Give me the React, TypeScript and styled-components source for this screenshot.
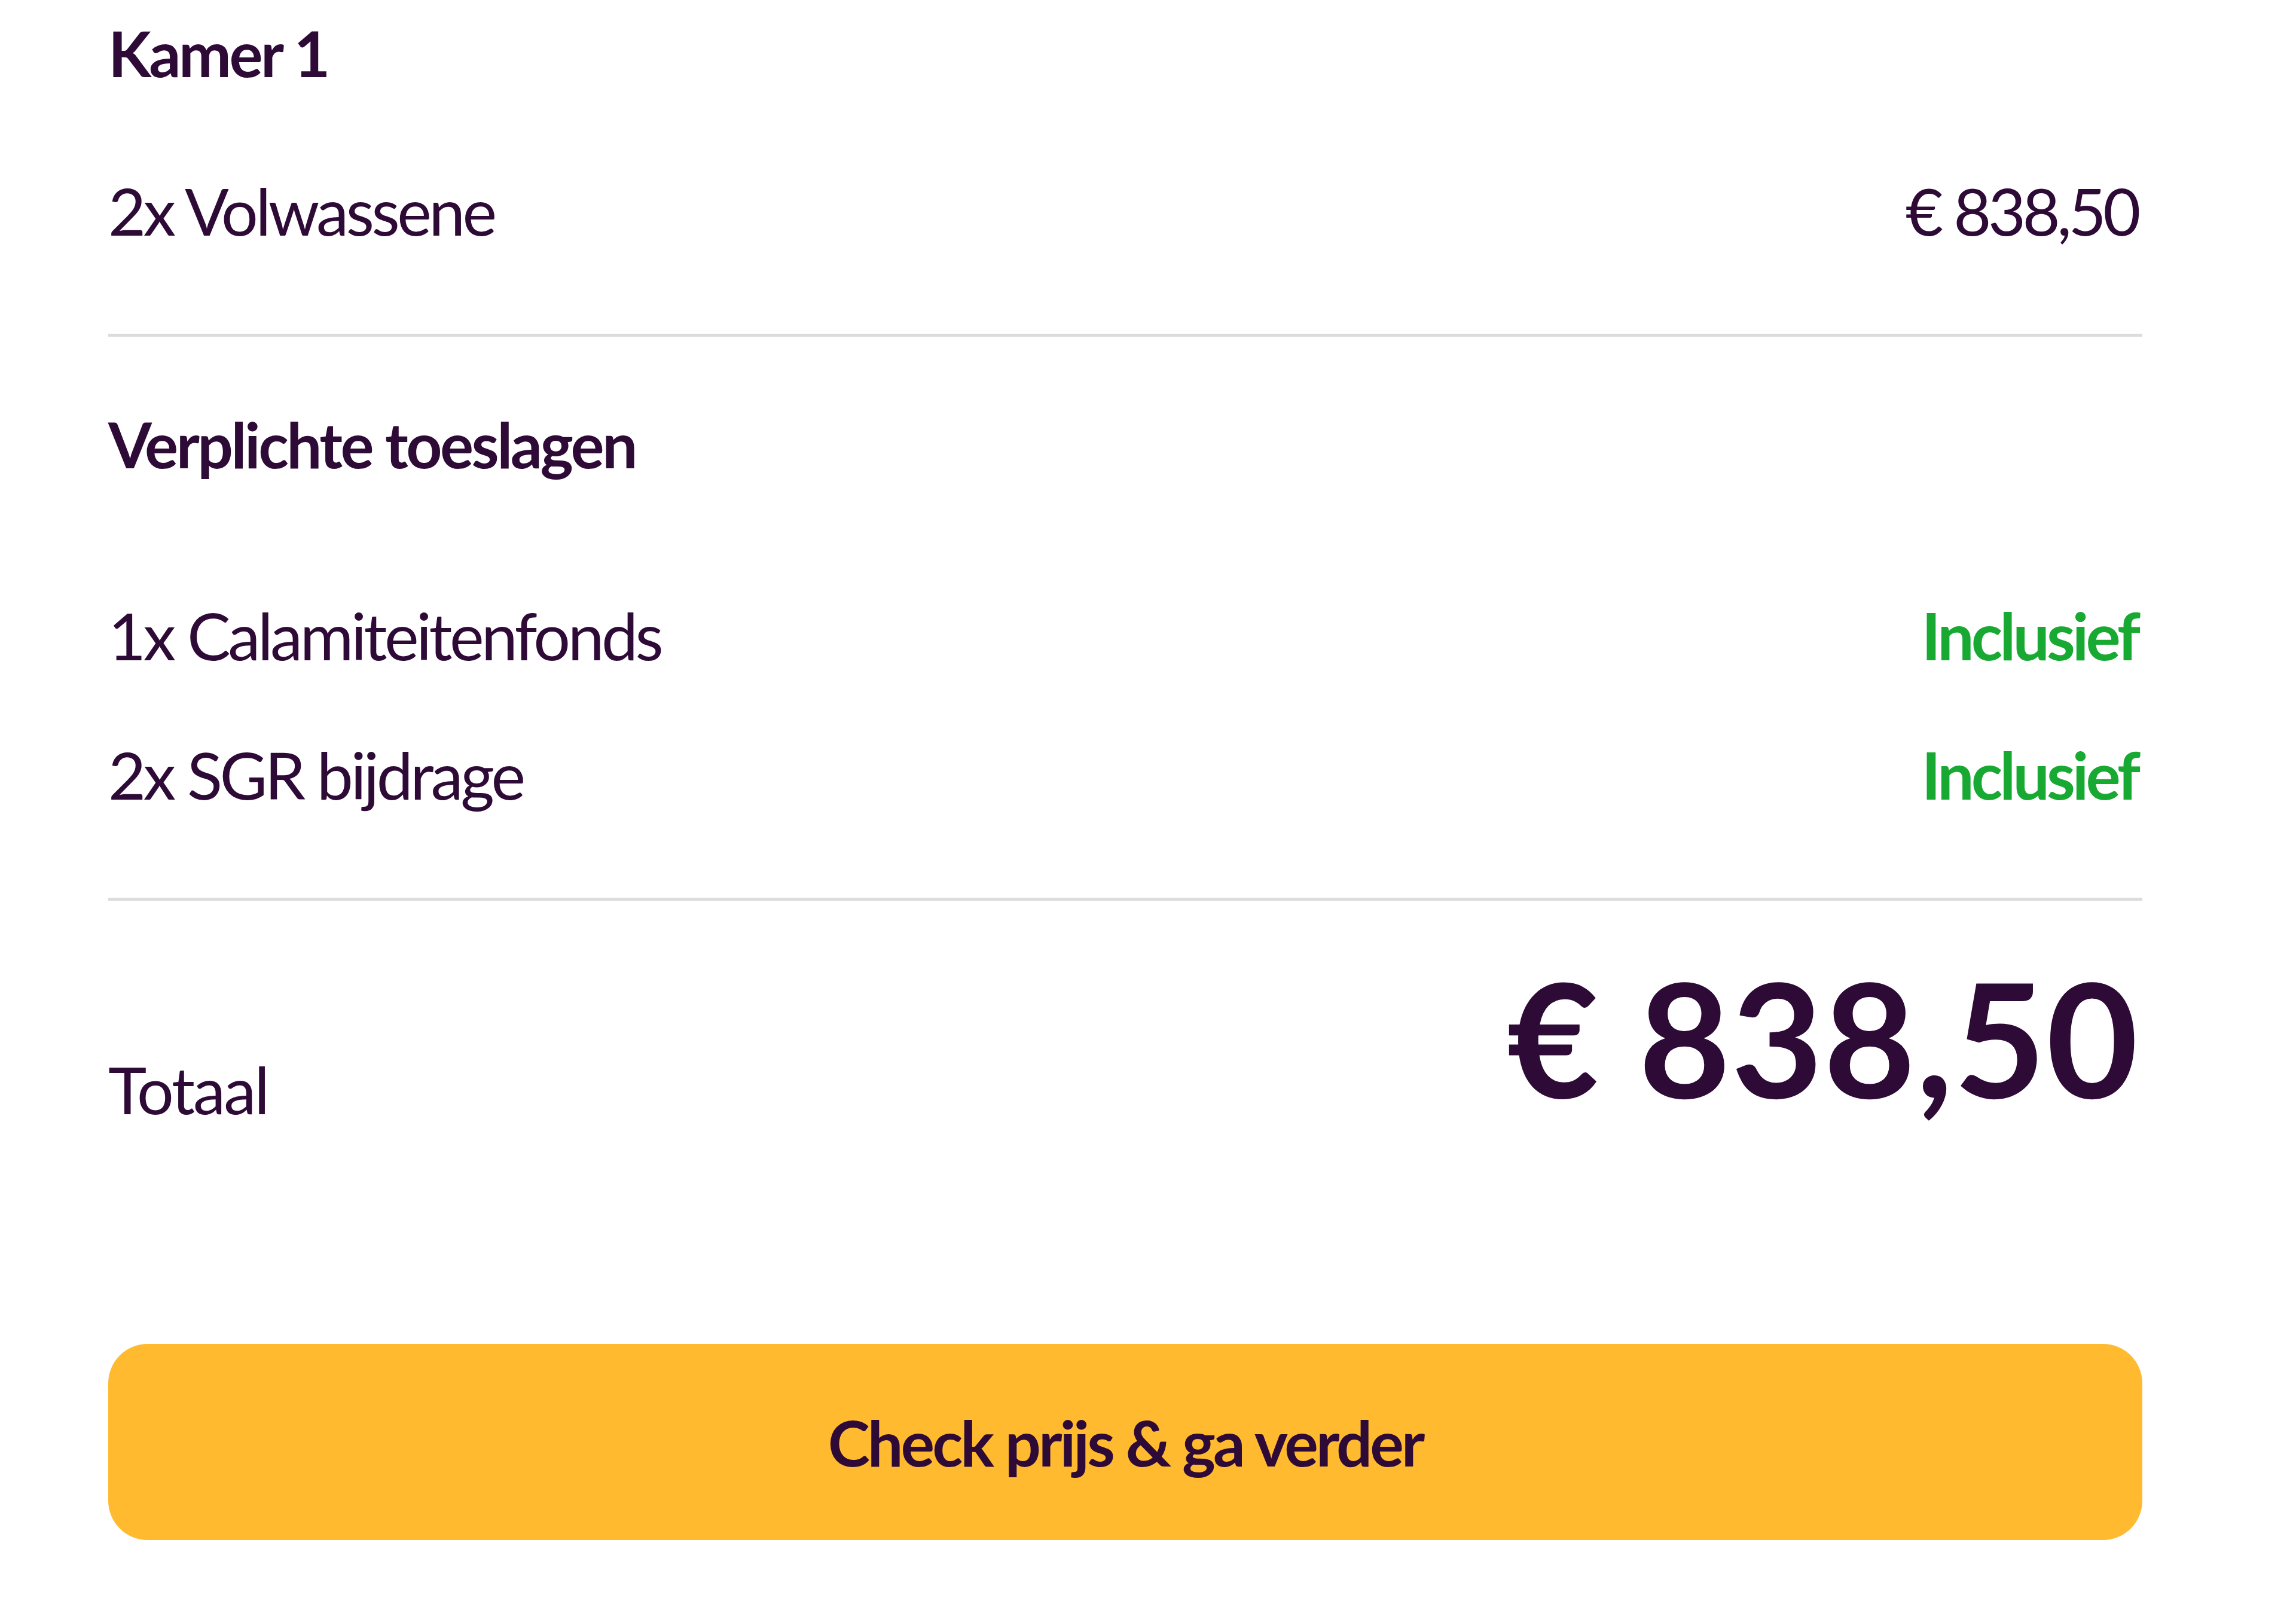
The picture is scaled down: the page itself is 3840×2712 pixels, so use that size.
import React from "react";
import styled, { createGlobalStyle } from "styled-components";

const GlobalStyle = createGlobalStyle`
  html, body {
    margin: 0;
    padding: 0;
    background: #ffffff;
  }
  body {
    font-family: Lato, "Open Sans", sans-serif;
    color: #2e0a36;
  }
`;

const Page = styled.div`
  width: 3402px;
  margin-left: 181px;
  padding-top: 25px;
  display: flex;
  flex-direction: column;
`;

const Heading = styled.h2<{ $gap?: number }>`
  margin: 0;
  margin-top: ${(p) => p.$gap ?? 0}px;
  font-size: 105px;
  line-height: 1.2;
  font-weight: 700;
  letter-spacing: -3.5px;
  color: #2e0a36;
`;

const Row = styled.div<{ $gap: number }>`
  display: flex;
  justify-content: space-between;
  align-items: baseline;
  margin-top: ${(p) => p.$gap}px;
  font-size: 109px;
  line-height: 136px;
`;

const Label = styled.span`
  font-weight: 400;
  letter-spacing: -4.5px;
`;

const Amount = styled.span<{ $included?: boolean }>`
  margin-right: 8px;
  font-weight: ${(p) => (p.$included ? 700 : 400)};
  letter-spacing: ${(p) => (p.$included ? -5 : -5.5)}px;
  color: ${(p) => (p.$included ? "#18a932" : "#2e0a36")};
`;

const Divider = styled.hr<{ $gap: number }>`
  margin: ${(p) => p.$gap}px 0 0;
  border: 0;
  height: 5px;
  background: #dcdcdc;
`;

const TotalRow = styled.div`
  display: flex;
  justify-content: space-between;
  align-items: flex-start;
  padding-top: 95px;
`;

const TotalLabel = styled.span`
  margin-top: 152px;
  font-size: 109px;
  line-height: 136px;
  letter-spacing: -3px;
`;

const TotalAmount = styled.span`
  margin-right: 6px;
  font-size: 265px;
  line-height: 1;
  font-weight: 700;
  letter-spacing: 1px;
`;

const CheckButton = styled.button`
  margin-top: 358px;
  height: 328px;
  width: 100%;
  border: 0;
  border-radius: 66px;
  background: #ffba2f;
  color: #2e0a36;
  font-family: Lato, "Open Sans", sans-serif;
  font-size: 106px;
  font-weight: 700;
  letter-spacing: -4px;
  cursor: pointer;
`;

const App = () => {
  return (
    <>
      <GlobalStyle />
      <Page>
        <Heading>Kamer 1</Heading>
        <Row $gap={133}>
          <Label>2x Volwassene</Label>
          <Amount>€ 838,50</Amount>
        </Row>
        <Divider $gap={138} />
        <Heading $gap={116}>Verplichte toeslagen</Heading>
        <Row $gap={189}>
          <Label>1x Calamiteitenfonds</Label>
          <Amount $included>Inclusief</Amount>
        </Row>
        <Row $gap={97}>
          <Label>2x SGR bijdrage</Label>
          <Amount $included>Inclusief</Amount>
        </Row>
        <Divider $gap={138} />
        <TotalRow>
          <TotalLabel>Totaal</TotalLabel>
          <TotalAmount>€ 838,50</TotalAmount>
        </TotalRow>
        <CheckButton>Check prijs &amp; ga verder</CheckButton>
      </Page>
    </>
  );
};

export default App;
